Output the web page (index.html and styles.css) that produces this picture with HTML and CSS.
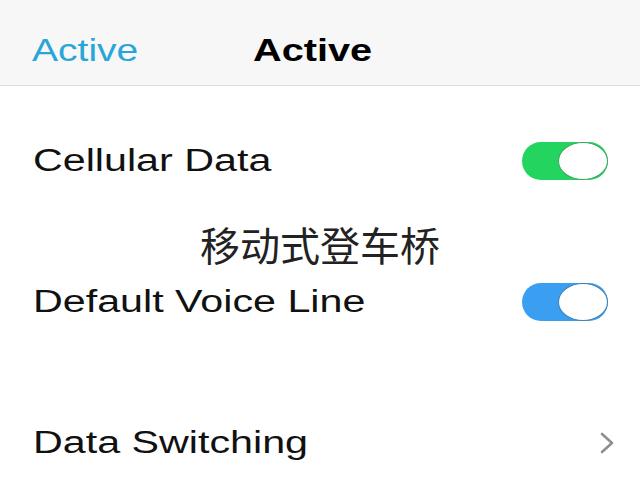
FILE: index.html
```html
<!DOCTYPE html>
<html>
<head>
<meta charset="utf-8">
<link rel="stylesheet" href="styles.css">
</head>
<body>
<div class="screen">
  <header class="nav">
    <span class="back">Active</span>
    <span class="title">Active</span>
  </header>
  <div class="list">
    <div class="row">
      <span class="label">Cellular Data</span>
      <span class="toggle green"><span class="knob"></span></span>
    </div>
    <div class="row">
      <span class="label">Default Voice Line</span>
      <span class="toggle blue"><span class="knob"></span></span>
    </div>
    <div class="row">
      <span class="label">Data Switching</span>
      <svg class="chevron" width="16" height="22" viewBox="0 0 16 22"><path d="M3 2 L13 11 L3 20" fill="none" stroke="#8e8e93" stroke-width="2.6" stroke-linecap="round" stroke-linejoin="round"/></svg>
    </div>
  </div>
  <div class="watermark">移动式登车桥</div>
</div>
</body>
</html>
```
FILE: styles.css
```css
html, body {
  margin: 0;
  padding: 0;
  background: #ffffff;
}
.screen {
  position: relative;
  width: 640px;
  height: 480px;
  overflow: hidden;
  font-family: "Liberation Sans", Arial, sans-serif;
  background: #ffffff;
}
.nav {
  display: grid;
  grid-template-columns: 221px auto;
  align-items: center;
  height: 86px;
  box-sizing: border-box;
  padding: 30px 0 16px 32px;
  background: #f7f7f7;
  border-bottom: 1px solid #dcdcdc;
  font-size: 32px;
  line-height: 40px;
}
.back,
.title {
  display: inline-block;
  transform-origin: left center;
  transform: scaleX(1.22);
}
.back {
  color: #2aa5d8;
}
.title {
  font-weight: bold;
  color: #000;
  transform: scaleX(1.24);
}
.list {
  padding-top: 4px;
}
.row {
  display: flex;
  align-items: center;
  justify-content: space-between;
  height: 141px;
  padding: 0 32px 0 33px;
}
.label {
  display: inline-block;
  font-size: 31px;
  color: #111;
  transform-origin: left center;
  transform: scaleX(1.33);
}
.toggle {
  position: relative;
  width: 86px;
  height: 38px;
  border-radius: 19px;
  box-sizing: border-box;
}
.toggle.green {
  background: #23d45f;
}
.toggle.blue {
  background: #3a9ff0;
}
.knob {
  position: absolute;
  right: 0;
  top: 0;
  width: 50px;
  height: 38px;
  border-radius: 50%;
  background: #fff;
  box-sizing: border-box;
  border: 1.5px solid rgba(0, 0, 0, 0.25);
}
.toggle.green .knob {
  border-color: #3fa35e;
}
.toggle.blue .knob {
  border-color: #3f7fb0;
}
.chevron {
  margin-right: -7px;
}
.watermark {
  position: absolute;
  left: 0;
  right: 0;
  top: 220px;
  text-align: center;
  font-family: "Noto Sans CJK SC", sans-serif;
  font-size: 40px;
  line-height: 48px;
  color: #222;
}
```
